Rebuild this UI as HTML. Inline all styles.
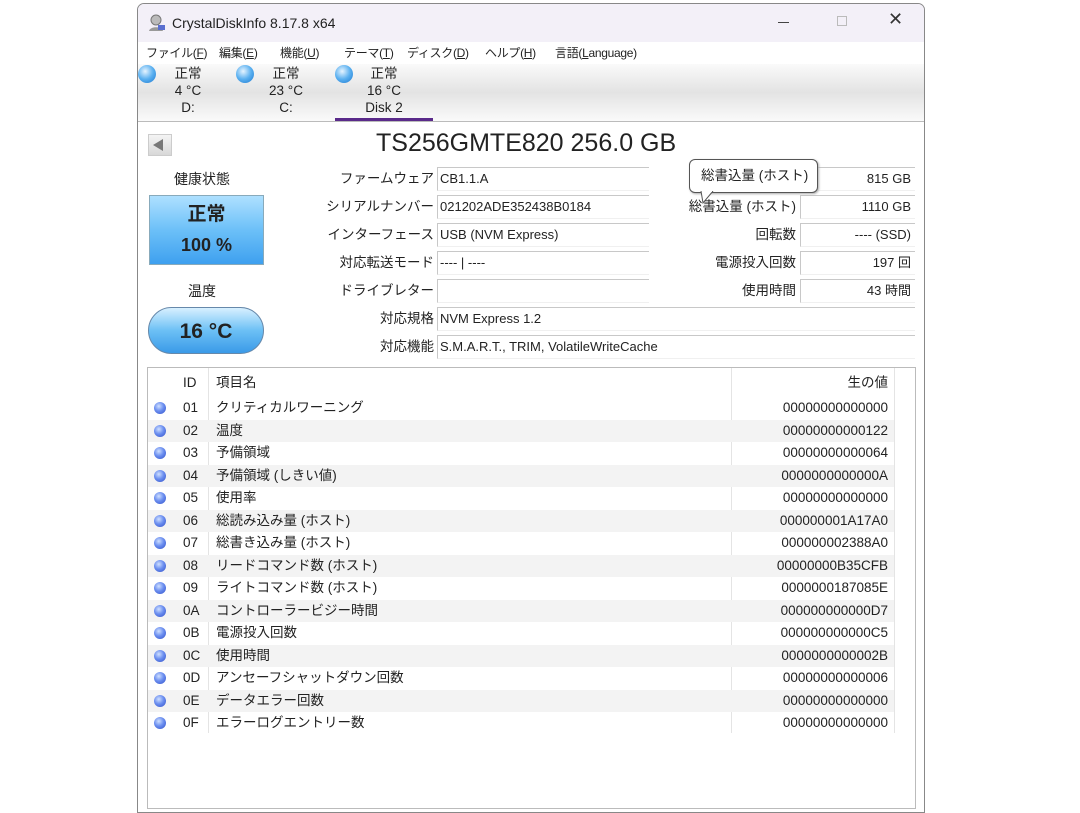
<!DOCTYPE html>
<html><head><meta charset="utf-8"><style>
*{margin:0;padding:0;box-sizing:border-box}
body{width:1080px;height:810px;background:#fff;position:relative;overflow:hidden;font-family:"Liberation Sans","Noto Sans CJK JP",sans-serif;color:#222;font-size:13px;line-height:18px}
.a{position:absolute;white-space:nowrap}
.win{position:absolute;left:137px;top:3px;width:788px;height:810px;border:1px solid #888;border-radius:7px 7px 0 0;background:#fff;overflow:hidden}
.fld{position:absolute;height:24px;border-top:1px solid #c8c8c8;border-left:1px solid #c8c8c8;border-bottom:1px solid #f0f0f0;padding:0 2px;font-size:13px;line-height:22px;white-space:nowrap}
.lbl{position:absolute;text-align:right;font-size:13.5px;line-height:24px;white-space:nowrap}
.row{position:absolute;left:0;width:746px;height:22.5px;font-size:13.5px;line-height:22px}
.row .a{top:0;line-height:22px}
.row.g{background:#f3f3f3}
.dot{position:absolute;left:6px;top:5px;width:12px;height:12px;border-radius:50%;background:radial-gradient(circle at 40% 35%,#cfe0ff 0,#6c8ff0 45%,#2f4fc8 100%)}
.bdot{position:absolute;width:18px;height:18px;border-radius:50%;background:radial-gradient(circle at 40% 35%,#e6f4ff 0,#5ab0f0 50%,#1c78d0 100%)}
.m{position:absolute;top:40px;font-size:12px;line-height:18px;white-space:nowrap;letter-spacing:-0.3px}
</style></head><body>
<div class="win">
 <div class="a" style="left:0;top:0;width:788px;height:38px;background:#f3f0f8"></div>
 <svg class="a" style="left:9px;top:9px" width="20" height="20" viewBox="0 0 20 20"><circle cx="9" cy="7" r="5" fill="#bbb" stroke="#777"/><path d="M2 18c1-5 13-5 14 0z" fill="#999"/><rect x="11" y="12" width="7" height="5" fill="#5a6fd0"/></svg>
 <div class="a" style="left:34px;top:10px;font-size:14px">CrystalDiskInfo 8.17.8 x64</div>
 <div class="a" style="left:640px;top:18px;width:11px;height:1px;background:#444"></div>
 <div class="a" style="left:699px;top:12px;width:10px;height:10px;border:1px solid #bbb"></div>
 <div class="a" style="left:750px;top:6px;font-size:18px;color:#333">✕</div>
 <div class="m" style="left:8px">ファイル(<u>F</u>)</div>
 <div class="m" style="left:81px">編集(<u>E</u>)</div>
 <div class="m" style="left:142px">機能(<u>U</u>)</div>
 <div class="m" style="left:206px">テーマ(<u>T</u>)</div>
 <div class="m" style="left:269px">ディスク(<u>D</u>)</div>
 <div class="m" style="left:347px">ヘルプ(<u>H</u>)</div>
 <div class="m" style="left:417px">言語(<u>L</u>anguage)</div>
 <div class="a" style="left:0;top:60px;width:788px;height:57px;background:linear-gradient(#fafafa,#e3e3e3 50%,#fafafa)"></div>
 <div class="a" style="left:0;top:117px;width:788px;height:1px;background:#bbb"></div>
 <div class="bdot" style="left:0;top:61px"></div><div class="bdot" style="left:98px;top:61px"></div><div class="bdot" style="left:197px;top:61px"></div>
 <div class="a" style="left:20px;top:61px;width:60px;text-align:center;font-size:13.5px;line-height:17px">正常<br>4 °C<br>D:</div>
 <div class="a" style="left:118px;top:61px;width:60px;text-align:center;font-size:13.5px;line-height:17px">正常<br>23 °C<br>C:</div>
 <div class="a" style="left:216px;top:61px;width:60px;text-align:center;font-size:13.5px;line-height:17px">正常<br>16 °C<br>Disk 2</div>
 <div class="a" style="left:197px;top:114px;width:98px;height:3px;background:#5a2a8a"></div>
 <div class="a" style="left:10px;top:130px;width:24px;height:22px;background:linear-gradient(#f4f4f4,#d8d8d8);border:1px solid #ccc"></div>
 <div class="a" style="left:15px;top:135px;width:0;height:0;border-top:6px solid transparent;border-bottom:6px solid transparent;border-right:10px solid #777"></div>
 <div class="a" style="left:238px;top:124px;font-size:25px;line-height:30px">TS256GMTE820 256.0 GB</div>
 <div class="a" style="left:36px;top:166px;font-size:14px">健康状態</div>
 <div class="a" style="left:11px;top:191px;width:115px;height:70px;border:1px solid #8ab;background:linear-gradient(#aee0ff,#6cc0f8 50%,#3ea0ef);text-align:center;font-weight:bold;font-size:19px;line-height:30px;padding-top:4px">正常<br><span style="font-size:18px">100 %</span></div>
 <div class="a" style="left:50px;top:278px;font-size:14px">温度</div>
 <div class="a" style="left:10px;top:303px;width:116px;height:47px;border-radius:24px;border:1px solid #68a;background:linear-gradient(#d8f0ff,#6cc0f5 50%,#3a9ae8);text-align:center;font-weight:bold;font-size:21px;line-height:47px">16 °C</div>

 <div class="lbl" style="left:150px;width:146px;top:163px">ファームウェア</div>
 <div class="lbl" style="left:150px;width:146px;top:191px">シリアルナンバー</div>
 <div class="lbl" style="left:150px;width:146px;top:219px">インターフェース</div>
 <div class="lbl" style="left:150px;width:146px;top:247px">対応転送モード</div>
 <div class="lbl" style="left:150px;width:146px;top:275px">ドライブレター</div>
 <div class="lbl" style="left:150px;width:146px;top:303px">対応規格</div>
 <div class="lbl" style="left:150px;width:146px;top:331px">対応機能</div>
 <div class="fld" style="left:299px;width:212px;top:163px">CB1.1.A</div>
 <div class="fld" style="left:299px;width:212px;top:191px">021202ADE352438B0184</div>
 <div class="fld" style="left:299px;width:212px;top:219px">USB (NVM Express)</div>
 <div class="fld" style="left:299px;width:212px;top:247px">---- | ----</div>
 <div class="fld" style="left:299px;width:212px;top:275px"></div>
 <div class="fld" style="left:299px;width:478px;top:303px">NVM Express 1.2</div>
 <div class="fld" style="left:299px;width:478px;top:331px">S.M.A.R.T., TRIM, VolatileWriteCache</div>
 <div class="lbl" style="left:520px;width:138px;top:191px">総書込量 (ホスト)</div>
 <div class="lbl" style="left:520px;width:138px;top:219px">回転数</div>
 <div class="lbl" style="left:520px;width:138px;top:247px">電源投入回数</div>
 <div class="lbl" style="left:520px;width:138px;top:275px">使用時間</div>
 <div class="fld" style="left:662px;width:115px;top:163px;text-align:right;padding-right:4px">815 GB</div>
 <div class="fld" style="left:662px;width:115px;top:191px;text-align:right;padding-right:4px">1110 GB</div>
 <div class="fld" style="left:662px;width:115px;top:219px;text-align:right;padding-right:4px">---- (SSD)</div>
 <div class="fld" style="left:662px;width:115px;top:247px;text-align:right;padding-right:4px">197 回</div>
 <div class="fld" style="left:662px;width:115px;top:275px;text-align:right;padding-right:4px">43 時間</div>
 <div class="a" style="left:551px;top:155px;width:129px;height:34px;border:1px solid #555;border-radius:6px;background:#fff;box-shadow:1px 1px 2px #aaa;font-size:13.5px;line-height:32px;padding-left:11px">総書込量 (ホスト)</div>
 <svg class="a" style="left:562px;top:187px" width="16" height="14"><path d="M1 0 L3 12 L13 0" fill="#fff" stroke="#555"/><path d="M2 0 L12 0" stroke="#fff" stroke-width="2"/></svg>

 <div class="a" style="left:9px;top:363px;width:769px;height:442px;border:1px solid #bbb;overflow:hidden">
  <div class="a" style="left:60px;top:0;width:1px;height:365px;background:#e4e4e4"></div>
  <div class="a" style="left:583px;top:0;width:1px;height:365px;background:#e4e4e4"></div>
  <div class="a" style="left:746px;top:0;width:1px;height:365px;background:#e4e4e4"></div>
  <div class="a" style="left:35px;top:5px;font-size:13.5px;line-height:20px">ID</div>
  <div class="a" style="left:68px;top:5px;font-size:13.5px;line-height:20px">項目名</div>
  <div class="a" style="left:600px;width:140px;text-align:right;top:5px;font-size:13.5px;line-height:20px">生の値</div>
  <div id="rows"></div>
 </div>
</div>
<script>
var d=[["01","クリティカルワーニング","00000000000000"],["02","温度","00000000000122"],["03","予備領域","00000000000064"],["04","予備領域 (しきい値)","0000000000000A"],["05","使用率","00000000000000"],["06","総読み込み量 (ホスト)","000000001A17A0"],["07","総書き込み量 (ホスト)","000000002388A0"],["08","リードコマンド数 (ホスト)","00000000B35CFB"],["09","ライトコマンド数 (ホスト)","0000000187085E"],["0A","コントローラービジー時間","000000000000D7"],["0B","電源投入回数","000000000000C5"],["0C","使用時間","0000000000002B"],["0D","アンセーフシャットダウン回数","00000000000006"],["0E","データエラー回数","00000000000000"],["0F","エラーログエントリー数","00000000000000"]];
var h="";d.forEach(function(r,i){h+='<div class="row'+(i%2?' g':'')+'" style="top:'+(29+i*22.5)+'px"><div class="dot"></div><div class="a" style="left:35px">'+r[0]+'</div><div class="a" style="left:68px">'+r[1]+'</div><div class="a" style="left:590px;width:150px;text-align:right">'+r[2]+'</div></div>';});
document.getElementById("rows").innerHTML=h;
</script>
</body></html>
